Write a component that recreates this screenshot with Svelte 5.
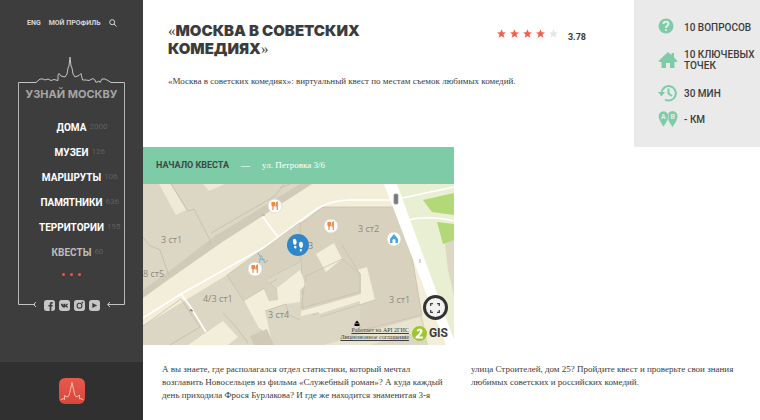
<script lang="ts">
  const menu = [
    { title: 'Дома', count: 2000 },
    { title: 'Музеи', count: 126 },
    { title: 'Маршруты', count: 106 },
    { title: 'Памятники', count: 636 },
    { title: 'Территории', count: 195 },
    { title: 'Квесты', count: 60, active: true }
  ];

  const rating = 3.78;
  const stars = [1, 2, 3, 4, 5];

  const houses = [
    { x: 161, y: 243, label: '3 ст1' },
    { x: 358, y: 232, label: '3 ст2' },
    { x: 143, y: 277, label: '8 ст5' },
    { x: 203, y: 302, label: '4/3 ст1' },
    { x: 268, y: 318, label: '3 ст4' },
    { x: 389, y: 303, label: '3 ст1' },
    { x: 308, y: 249, label: '3' }
  ];

  const cafes = [
    { x: 275, y: 206 },
    { x: 331, y: 226 },
    { x: 255, y: 269 }
  ];
</script>

<div class="page">
  <aside class="sidebar">
    <nav class="top-links">
      <a href="#eng">ENG</a>
      <a href="#profile">МОЙ ПРОФИЛЬ</a>
      <button class="search" aria-label="Поиск">
        <svg width="8" height="8" viewBox="0 0 8 8"><circle cx="3.2" cy="3.2" r="2.5" /><path d="M5 5 7.5 7.5" /></svg>
      </button>
    </nav>

    <div class="frame">
      <svg class="skyline" viewBox="18 56 107 27" aria-hidden="true">
        <path d="M18.500 83V82.500H36L40 79H43L45 80L48 79L51 80.500L54 79.500L58 80.500V75L59 73.500L61 76L65 77L67 74L68 68L69 66L70 57L71 66L72 68L73 74L75 77L79 75.500L81 73.500L82.500 80H86L89 80.500L93 78.500L95 80L96 82.500L99 81L100 82.500L102 79L105 79L108 80.500L111 82.500H124.500V83" fill="none" />
      </svg>
      <div class="frame-body">
        <a class="logo" href="#home">УЗНАЙ МОСКВУ</a>
        <ul class="menu">
          {#each menu as item}
            <li>
              <a href="#menu" class:active={item.active}>{item.title}</a>
              <span class="count">{item.count}</span>
            </li>
          {/each}
        </ul>
        <button class="more" aria-label="Ещё"><i></i><i></i><i></i></button>
      </div>
      <div class="socials">
        <svg class="tail" width="18" height="10" viewBox="0 0 18 10"><path d="M.5 0V4.500H17M18 2L15.500 4.500L18 7" /></svg>
        <div class="icons">
          <a href="#fb" aria-label="Facebook">
            <svg viewBox="0 0 10 10"><rect width="10" height="10" rx="2.500" /><path class="cut" d="M5.200 10V6H4V4.500H5.200V3.500Q5.200 1.800 7 1.800H8V3.200H7.300Q6.700 3.200 6.700 3.800V4.500H8L7.800 6H6.700V10Z" /></svg>
          </a>
          <a href="#vk" aria-label="ВКонтакте">
            <svg viewBox="0 0 10 10"><rect width="10" height="10" rx="2.500" /><path class="cut" d="M1.500 3.300H3L4 5V3.300H5.700V4.700L7 3.300H8.500L7 5L8.600 6.900H7L5.700 5.600V6.900H4.800Q2.600 6.900 1.500 3.300Z" /></svg>
          </a>
          <a href="#inst" aria-label="Instagram">
            <svg viewBox="0 0 10 10"><rect width="10" height="10" rx="2.500" /><circle class="ring" cx="5" cy="5.200" r="2.200" /><circle class="cut" cx="7.600" cy="2.300" r=".8" /></svg>
          </a>
          <a href="#yt" aria-label="YouTube">
            <svg viewBox="0 0 10 10"><rect width="10" height="10" rx="2.500" /><path class="cut" d="M3 2.800L7.500 5L3 7.200Z" /></svg>
          </a>
        </div>
        <svg class="tail" width="18" height="10" viewBox="0 0 18 10"><path d="M17.500 0V4.500H1M3 2L.5 4.500L3 7" /></svg>
      </div>
    </div>

    <div class="app">
      <a href="#app" aria-label="Приложение">
        <svg width="26" height="26" viewBox="0 0 26 26">
          <defs><linearGradient id="red" x1="0" y1="0" x2="0" y2="1"><stop offset="0" stop-color="#e8584c" /><stop offset="1" stop-color="#d8463c" /></linearGradient></defs>
          <rect width="26" height="26" rx="6" fill="url(#red)" />
          <path d="M1.500 22L4 20.500L5.500 21.500V17.500L8 19L10 17.500L11.500 11.500L13 4.500L14.500 11.500L16 17.500L18 19L20.500 17V21L22 20.500L24.500 22" fill="none" stroke="#f9cbb9" stroke-width=".9" />
        </svg>
      </a>
    </div>
  </aside>

  <main>
    <header>
      <div class="intro">
        <div class="title-row">
          <h1><span>«</span>МОСКВА В СОВЕТСКИХ<br />КОМЕДИЯХ<span>»</span></h1>
          <div class="rating">
            {#each stars as star}
              <svg class:empty={star > Math.round(rating)} width="9" height="9" viewBox="0 0 10 10"><path d="M5 .3L6.400 3.500L9.900 3.800L7.200 6.100L8.100 9.600L5 7.700L1.900 9.600L2.800 6.100L.1 3.800L3.600 3.500Z" /></svg>
            {/each}
            <b>{rating}</b>
          </div>
        </div>
        <p>«Москва в советских комедиях»: виртуальный квест по местам съемок любимых комедий.</p>
      </div>

      <ul class="stats">
        <li>
          <svg viewBox="0 0 20 20"><circle cx="8" cy="9" r="7.500" /><path class="line" d="M5.500 7Q5.500 4.800 8 4.800Q10.500 4.800 10.500 7Q10.500 8.200 9 9Q8 9.500 8 11" /><circle class="light" cx="8" cy="13" r="1.100" /></svg>
          <span>10 вопросов</span>
        </li>
        <li class="tall">
          <svg viewBox="0 0 20 20"><path d="M.5 11L10 2L13.500 5.200V3H16V7.500L19.500 11L18.500 12H16.500V18H12V13H8V18H3.500V12H1.500Z" /></svg>
          <span>10 ключевых точек</span>
        </li>
        <li>
          <svg viewBox="0 0 20 20"><path class="stroke" d="M3.500 10A7.200 7.200 0 1 1 7 16.500" /><path d="M0 9H7L3.500 13.500Z" /><path class="stroke" d="M10.500 5.500V10.500L14 13" /></svg>
          <span>30 мин</span>
        </li>
        <li class="low">
          <svg viewBox="0 0 20 20">
            <path d="M14.500 2A5 5 0 0 1 19.500 7.500Q19.500 11 14.500 18Q9.500 11 9.500 7.500A5 5 0 0 1 14.500 2Z" />
            <path class="pin" d="M5.500 2A5 5 0 0 1 10.500 7.500Q10.500 11 5.500 18Q.5 11 .5 7.500A5 5 0 0 1 5.500 2Z" />
            <text x="3" y="10">A</text><text x="12.500" y="10">B</text>
          </svg>
          <span>- км</span>
        </li>
      </ul>
    </header>

    <section class="start">
      <div class="start-head">
        <h2>Начало квеста</h2>
        <span>—</span>
        <address>ул. Петровка 3/6</address>
      </div>
      <div class="map">
        <svg class="plan" viewBox="143 184 311 161" preserveAspectRatio="xMidYMid slice">
          <rect x="143" y="184" width="311" height="161" fill="#dcd6c4" />
          <path d="M384 184H454V345H446Z" fill="#e9efd3" />
          <path d="M423 200L454 193V215L432 212ZM437 222L454 224V241L443 244Z" fill="#b3d877" />
          <path d="M445 244L454 240V296L448 270Z" fill="#dcd8c4" />
          <!-- street with its pavement -->
          <path d="M143 290L168 272L215 236L300 184H312L303 192L221 243L170 279L143 298Z" fill="#d0cab8" />
          <path d="M143 298L168 280L221 243L312 184H386L413 250L450 345H428L422 315L410 245L395 207H323L227 275L143 326Z" fill="#f3eeda" />
          <path d="M159 184H171L186 210L176 215ZM203 184H225L209 191Z" fill="#eeead6" />
          <g class="walls">
            <path d="M171 184L188 211L194 209L210 240V246M143 237L149 245L160 250L169 276" />
            <path d="M211 233L275 196L284 184M280 188L290 184" />
            <path d="M227 275L244 301L270 345M244 301L277 279" />
            <path d="M143 326L181 299L200 327M223 313L236 327L248 343M200 327L170 345" />
          </g>
          <path d="M323 207H393L410 245L422 315L360 331L320 317L303 310L300 224Z" fill="#d8d1be" stroke="#cac2ad" stroke-width=".8" />
          <path d="M227 275L300 222V262L265 280L278 290L277 301H268L264 288L244 301Z" fill="#d8d1be" stroke="#cac2ad" stroke-width=".6" />
          <!-- courtyards -->
          <path d="M188 345L223 321L238 337L228 345ZM244 301L264 289L269 301L278 300L277 288L300 270L306 285L300 290V302L286 304L265 311L271 338L259 328Z" fill="#f3eed9" />
          <path d="M316 254L334 243L342 259L326 272ZM357 270L367 267L375 300L320 317L319 312L301 316V311L361 294V274Z" fill="#f3eed9" />
          <path d="M265 311L286 304L289 315L300 320L360 301V330L320 345H273V338Z" fill="#dcd6c4" />
          <path d="M265 311L286 304L289 315L300 320M375 300L320 317M301 308L360 292V274L342 259L306 276ZM342 245L360 274" fill="none" stroke="#cac2ad" stroke-width=".8" />
          <path d="M250 336L267 329L274 345H254Z" fill="#d0c9b6" />
          <path d="M324 345L420 317L424 330L370 345Z" fill="#e9e4d0" />
          <path d="M384 184H397L456 345H446Z" fill="#fff" />
          <g class="paths">
            <path d="M143 318L181 294L263 248L278 237L263 217M181 294L190 306L206 332" />
            <path d="M278 237L318 208Q333 200 350 200H393L454 187M407 220Q430 215 454 221" />
          </g>
          {#each houses as house}
            <text x={house.x} y={house.y}>{house.label}</text>
          {/each}
          <g class="signal">
            <rect x="394" y="194" width="4" height="10" rx="1" />
            <path d="M191 309L190 311H193ZM420 259V263M262 215H265" />
          </g>
          {#each cafes as cafe}
            <g transform="translate({cafe.x} {cafe.y})">
              <circle r="7" fill="#fff" stroke="#d5cfc0" stroke-width=".6" />
              <path d="M-3-4V-1Q-3 0-2 0V4M-1.800-4V0M-.6-4V-1Q-.6 0-2 0M2.300 4V-4Q.8-3 1 0H2.300" fill="none" stroke="#ec7f38" stroke-width="1.100" />
            </g>
          {/each}
          <g transform="translate(394 239)">
            <circle r="7" fill="#fff" stroke="#d5cfc0" stroke-width=".6" />
            <path d="M0-5L4 0V4H1.500V1Q0-1-1.500 1V4H-4V0Z" fill="#4aa5dc" />
          </g>
          <path d="M258 253L261 258L259 263M261 255L265 263L268 260M259 259L265 260" fill="none" stroke="#79b6dc" stroke-width="1" />
          <g transform="translate(298 245)">
            <circle r="11" fill="#3085cb" />
            <path d="M-4.500-6Q-2-7-1.500-4Q-1-2-2-.5L-4-.2Q-6-4-4.500-6ZM-4 1L-1.800.7Q-1 3.500-2.600 3.500Q-4 3.500-4 1ZM2-3Q4.500-4 5-1Q5.200 1 4 3L2 2.600Q0-1 2-3ZM2 4L4 4.300Q4 7 2.600 6.700Q1.300 6.500 2 4Z" fill="#fff" />
          </g>
        </svg>
        <div class="map-foot">
          <div class="terms">
            <svg width="6" height="7" viewBox="0 0 6 7"><path d="M1 3L3 .5L5 3ZM.5 3.500H5.500V6H.5Z" /></svg>
            <a href="#api">Работает на API 2ГИС</a>
            <a href="#license">Лицензионное соглашение</a>
          </div>
          <div class="gis">
            <svg width="15" height="15" viewBox="0 0 15 15"><circle cx="7.500" cy="7.500" r="7.500" fill="#9fc62c" /><path d="M4.500 5Q5 2.500 7.500 2.500Q10.500 2.500 10.500 5Q10.500 7 7 10.500H11V12.500H3.500V11Q8 7 8 5.300Q8 4.500 7.300 4.500Q6.500 4.500 6.300 5.500Z" fill="#fff" /></svg>
            <b>GIS</b>
          </div>
        </div>
        <button class="expand" aria-label="На весь экран">
          <svg width="10" height="10" viewBox="0 0 10 10"><path d="M.7 3V.7H3M7 .7H9.300V3M9.300 7V9.300H7M3 9.300H.7V7" /></svg>
        </button>
      </div>
    </section>

    <p class="about">
      А вы знаете, где располагался отдел статистики, который мечтал возглавить Новосельцев из фильма «Служебный роман»? А куда каждый день приходила Фрося Бурлакова? И где же находится знаменитая 3-я улица Строителей, дом 25? Пройдите квест и проверьте свои знания любимых советских и российских комедий.
    </p>
  </main>
</div>

<style>
  :global(body) {
    margin: 0;
    background: #fff;
  }

  .page {
    display: flex;
    min-height: 100vh;
    font-family: Roboto, 'Liberation Sans', sans-serif;
    color: #3c3c3c;
  }

  a {
    color: inherit;
    text-decoration: none;
  }

  ul {
    list-style: none;
    margin: 0;
    padding: 0;
  }

  button {
    padding: 0;
    border: 0;
    background: none;
    cursor: pointer;
  }

  svg {
    display: block;
  }

  .sidebar {
    display: flex;
    flex-direction: column;
    flex: none;
    width: 143px;
    background: #3d3d3d;
    color: #fff;
  }

  .top-links {
    display: flex;
    align-items: center;
    gap: 8px;
    padding: 18px 0 0 27px;
    font-size: 7px;
    line-height: 10px;
    font-weight: 700;
    color: #d6d6d6;
  }

  .search svg {
    fill: none;
    stroke: #d6d6d6;
  }

  .frame {
    margin: 28px 18px 0;
  }

  .skyline {
    width: 100%;
    stroke: #c4c4c4;
  }

  .frame-body {
    border: solid #b4b4b4;
    border-width: 0 1px;
    text-align: center;
  }

  .logo {
    display: block;
    padding-top: 4px;
    font: 700 11px/14px Inter, sans-serif;
    color: #a6a6a6;
    white-space: nowrap;
  }

  .menu {
    padding-top: 14px;
  }

  .menu li {
    display: grid;
    grid-template-columns: minmax(0, 1fr) auto minmax(0, 1fr);
    column-gap: 3px;
    line-height: 25px;
  }

  .menu a {
    grid-column: 2;
    font-size: 10px;
    font-weight: 700;
    text-transform: uppercase;
  }

  .menu .active {
    color: #bdbdbd;
  }

  .count {
    font-size: 8px;
    line-height: 23px;
    text-align: left;
    color: #606060;
  }

  .more {
    display: flex;
    gap: 5px;
    margin: 0 auto;
    padding: 8px 0 24px;
  }

  .more i {
    width: 3px;
    height: 3px;
    border-radius: 50%;
    background: #ee5548;
  }

  .socials {
    display: flex;
    justify-content: space-between;
    align-items: flex-start;
  }

  .tail {
    fill: none;
    stroke: #c4c4c4;
  }

  .icons {
    display: flex;
    gap: 4px;
  }

  .icons svg {
    width: 11px;
    height: 11px;
    fill: #c6c6c6;
  }

  .icons .cut {
    fill: #3d3d3d;
  }

  .icons .ring {
    fill: none;
    stroke: #3d3d3d;
  }

  .app {
    display: flex;
    justify-content: center;
    margin-top: auto;
    padding: 16px 0;
    background: #303030;
  }

  main {
    flex: 1;
    min-width: 0;
  }

  header {
    display: flex;
    min-height: 147px;
  }

  .intro {
    flex: 1;
    padding: 22px 48px 0 25px;
  }

  .title-row {
    display: flex;
    justify-content: space-between;
    align-items: flex-start;
  }

  h1 {
    margin: 0;
    font: 900 15px/18px Inter, sans-serif;
    white-space: nowrap;
  }

  h1 span {
    font: 400 15px/15px 'Liberation Serif', serif;
  }

  .rating {
    display: flex;
    gap: 4px;
    padding-top: 7px;
    fill: #ef5f50;
  }

  .rating .empty {
    fill: #e6e6e6;
  }

  .rating b {
    padding: 2px 0 0 6px;
    font-size: 9px;
    line-height: 12px;
  }

  .intro p {
    margin: 17px 0 0;
    font: 9px/13px 'Liberation Serif', serif;
  }

  .stats {
    flex: none;
    box-sizing: border-box;
    width: 126px;
    padding: 16px 0 12px 24px;
    background: #eaeaea;
  }

  .stats li {
    display: flex;
    align-items: center;
    gap: 6px;
    min-height: 22px;
    font-size: 10px;
    font-weight: 500;
    line-height: 11px;
    text-transform: uppercase;
  }

  .stats .tall {
    min-height: 44px;
  }

  .stats .low {
    min-height: 30px;
  }

  .stats svg {
    flex: none;
    width: 20px;
    height: 20px;
    fill: #7fcba8;
  }

  .stats .line {
    fill: none;
    stroke: #eaeaea;
    stroke-width: 2;
  }

  .stats .light {
    fill: #eaeaea;
  }

  .stats .stroke {
    fill: none;
    stroke: #7fcba8;
    stroke-width: 2;
  }

  .stats .pin {
    stroke: #eaeaea;
    stroke-width: 0.6;
  }

  .stats text {
    font: 700 7px Roboto, sans-serif;
    fill: #eaeaea;
  }

  .start {
    width: 50.4%;
  }

  .start-head {
    display: flex;
    align-items: center;
    gap: 12px;
    padding: 0 13px;
    font: 9px/37px 'Liberation Serif', serif;
    background: #7dcca7;
    color: #fff;
  }

  h2 {
    margin: 0;
    font: 700 9px/37px Roboto, sans-serif;
    text-transform: uppercase;
    color: #3c4a43;
  }

  address {
    font-style: normal;
  }

  .map {
    position: relative;
  }

  .plan {
    width: 100%;
    height: 161px;
  }

  .plan text {
    font: 9px 'Open Sans', sans-serif;
    fill: #8d897f;
  }

  .walls {
    fill: none;
    stroke: #c5bda9;
    stroke-width: 0.8;
  }

  .paths {
    fill: none;
    stroke: #fff;
    stroke-width: 1.5;
  }

  .signal {
    fill: #777;
    stroke: #999;
    stroke-width: 0.8;
  }

  .map-foot {
    position: absolute;
    right: 6px;
    bottom: 4px;
    display: flex;
    align-items: flex-end;
    gap: 3px;
  }

  .terms {
    display: flex;
    flex-direction: column;
    align-items: flex-end;
    font: 6px/7px 'Liberation Serif', serif;
    text-decoration: underline;
  }

  .terms svg {
    align-self: flex-start;
    margin-left: 14px;
  }

  .gis {
    display: flex;
    align-items: center;
    gap: 2px;
    font: 12px/16px Roboto, sans-serif;
  }

  .expand {
    position: absolute;
    right: 6px;
    bottom: 25px;
    display: grid;
    place-items: center;
    width: 25px;
    height: 25px;
    border: 3px solid #333;
    border-radius: 50%;
    background: #f2f2f0;
  }

  .expand svg {
    fill: none;
    stroke: #444;
    stroke-width: 1.3;
  }

  .about {
    margin: 18px 8px 0 19px;
    column-count: 2;
    column-gap: 28px;
    font: 9px/13px 'Liberation Serif', serif;
  }
</style>
